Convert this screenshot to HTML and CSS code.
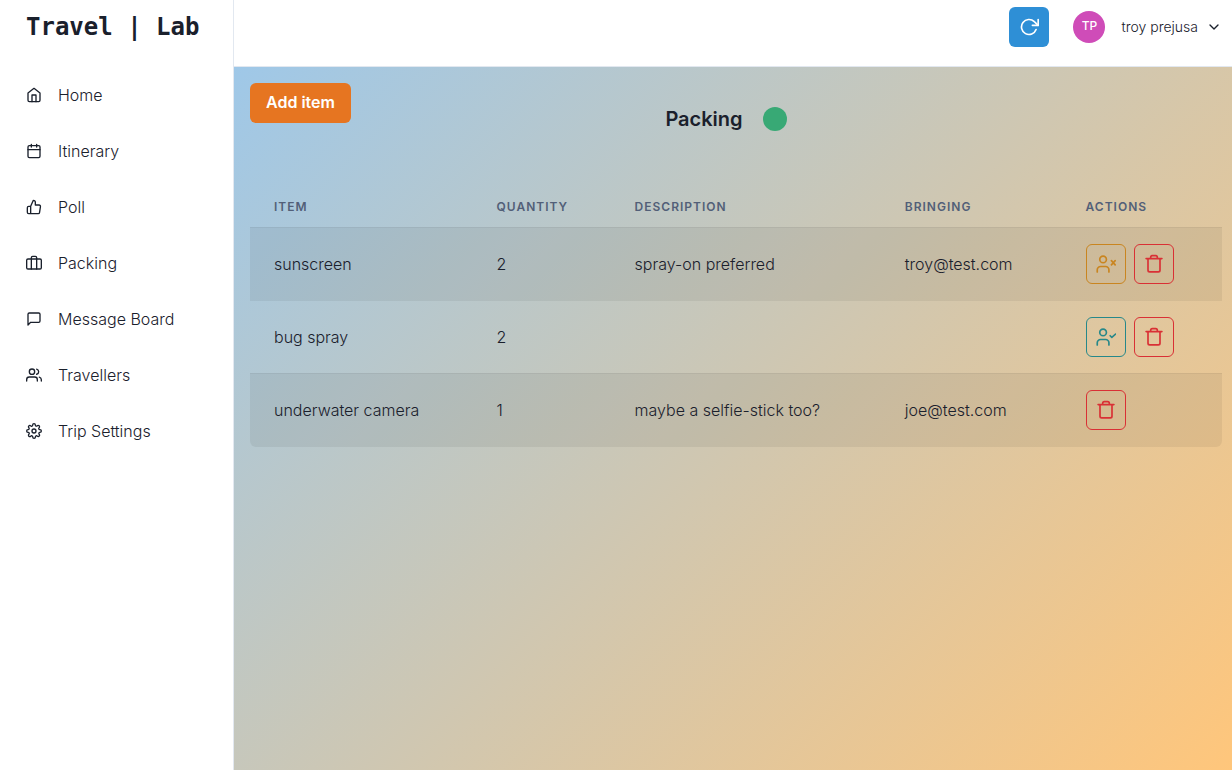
FILE: index.html
```html
<!DOCTYPE html>
<html lang="en">
<head>
<meta charset="utf-8">
<title>Travel | Lab</title>
<link rel="stylesheet" href="styles.css">
</head>
<body>
<svg class="sprite" aria-hidden="true">
  <symbol id="trash" viewBox="0 0 24 24"><path d="M4.800 5.500v14a2 2 0 0 0 2 2h10.400a2 2 0 0 0 2-2v-14M2.500 5.500h19M8 5.500V4a2 2 0 0 1 2-2h4a2 2 0 0 1 2 2v1.500"/></symbol>
</svg>
<div class="app">
  <aside class="sidebar">
    <h1 class="brand">Travel | Lab</h1>
    <nav class="nav">
      <a class="nav-link" href="#home"><svg class="nav-icon" viewBox="0 0 24 24"><path d="M3 9l9-7 9 7v11a2 2 0 0 1-2 2H5a2 2 0 0 1-2-2z"/><path d="M9 22V12h6v10"/></svg>Home</a>
      <a class="nav-link" href="#itinerary"><svg class="nav-icon" viewBox="0 0 24 24"><rect x="3" y="4" width="18" height="18" rx="2"/><path d="M16 2v4M8 2v4M3 10h18"/></svg>Itinerary</a>
      <a class="nav-link" href="#poll"><svg class="nav-icon" viewBox="0 0 24 24"><path d="M14 9V5a3 3 0 0 0-3-3l-4 9v11h11.280a2 2 0 0 0 2-1.700l1.380-9a2 2 0 0 0-2-2.300zM7 22H4a2 2 0 0 1-2-2v-7a2 2 0 0 1 2-2h3"/></svg>Poll</a>
      <a class="nav-link" href="#packing"><svg class="nav-icon" viewBox="0 0 24 24"><rect x="1" y="6" width="22" height="15" rx="2"/><path d="M16 21V4a2 2 0 0 0-2-2h-4a2 2 0 0 0-2 2v17"/></svg>Packing</a>
      <a class="nav-link" href="#messages"><svg class="nav-icon" viewBox="0 0 24 24"><path d="M21 15a2 2 0 0 1-2 2H7l-4 4V5a2 2 0 0 1 2-2h14a2 2 0 0 1 2 2z"/></svg>Message Board</a>
      <a class="nav-link" href="#travellers"><svg class="nav-icon" viewBox="0 0 24 24"><path d="M17 21v-2a4 4 0 0 0-4-4H5a4 4 0 0 0-4 4v2"/><circle cx="9" cy="7" r="4"/><path d="M23 21v-2a4 4 0 0 0-3-3.870M16 3.130a4 4 0 0 1 0 7.750"/></svg>Travellers</a>
      <a class="nav-link" href="#settings"><svg class="nav-icon" viewBox="0 0 24 24"><circle cx="12" cy="12" r="3"/><path d="M19.400 15a1.650 1.650 0 0 0 .33 1.820l.06.06a2 2 0 1 1-2.830 2.830l-.06-.06a1.650 1.650 0 0 0-2.800 1.170V21a2 2 0 0 1-4 0v-.09A1.650 1.650 0 0 0 7.200 19.700l-.06.06a2 2 0 1 1-2.830-2.830l.06-.06A1.650 1.650 0 0 0 3.090 14H3a2 2 0 0 1 0-4h.09A1.650 1.650 0 0 0 4.300 7.200l-.06-.06a2 2 0 1 1 2.830-2.830l.06.06A1.650 1.650 0 0 0 10 3.090V3a2 2 0 0 1 4 0v.09a1.650 1.650 0 0 0 2.800 1.210l.06-.06a2 2 0 1 1 2.830 2.830l-.06.06A1.650 1.650 0 0 0 20.910 10H21a2 2 0 0 1 0 4h-.09a1.650 1.650 0 0 0-1.510 1z"/></svg>Trip Settings</a>
    </nav>
  </aside>
  <div class="page">
    <header class="topbar">
      <button class="refresh" type="button" aria-label="Refresh"><svg class="icon" viewBox="0 0 24 24"><path d="M23 3v7h-7"/><path d="M20.490 15a9 9 0 1 1-2.120-9.360L23 10"/></svg></button>
      <button class="profile" type="button"><span class="avatar">TP</span>troy prejusa<svg class="chevron" viewBox="0 0 24 24"><path d="M6 9l6 6 6-6"/></svg></button>
    </header>
    <main class="content">
      <button class="add" type="button">Add item</button>
      <div class="heading"><h2 class="title">Packing</h2><span class="status"></span></div>
      <table class="items">
        <colgroup><col class="col-item"><col class="col-quantity"><col class="col-description"><col class="col-bringing"><col class="col-actions"></colgroup>
        <thead><tr><th>Item</th><th>Quantity</th><th>Description</th><th>Bringing</th><th>Actions</th></tr></thead>
        <tbody>
          <tr><td>sunscreen</td><td>2</td><td>spray-on preferred</td><td>troy@test.com</td><td><div class="actions">
            <button class="action leave" type="button" aria-label="Stop bringing"><svg class="icon" viewBox="0 0 24 24"><circle cx="8.500" cy="6.500" r="4"/><path d="M1.500 21.500v-2.500a4 4 0 0 1 4-4h6a4 4 0 0 1 4 4v2.500M18.500 8l4.500 5M23 8l-4.500 5"/></svg></button>
            <button class="action remove" type="button" aria-label="Delete"><svg class="icon"><use href="#trash"/></svg></button></div></td></tr>
          <tr><td>bug spray</td><td>2</td><td></td><td></td><td><div class="actions">
            <button class="action bring" type="button" aria-label="Bring item"><svg class="icon" viewBox="0 0 24 24"><circle cx="8.500" cy="6.500" r="4"/><path d="M1.500 21.500v-2.500a4 4 0 0 1 4-4h6a4 4 0 0 1 4 4v2.500M17 10.500l2 2 4.500-4"/></svg></button>
            <button class="action remove" type="button" aria-label="Delete"><svg class="icon"><use href="#trash"/></svg></button></div></td></tr>
          <tr><td>underwater camera</td><td>1</td><td>maybe a selfie-stick too?</td><td>joe@test.com</td><td><div class="actions">
            <button class="action remove" type="button" aria-label="Delete"><svg class="icon"><use href="#trash"/></svg></button></div></td></tr>
        </tbody>
      </table>
    </main>
  </div>
</div>
</body>
</html>
```
FILE: styles.css
```css
* { box-sizing: border-box; }
body { margin: 0; font: 300 16px/24px Inter, "Liberation Sans", sans-serif; color: #1a202c; background: #fff; }
button { font: inherit; color: inherit; border: 0; padding: 0; background: none; cursor: pointer; }
svg { flex: none; fill: none; stroke: currentColor; stroke-width: 2; stroke-linecap: round; stroke-linejoin: round; }
.sprite { display: none; }
.app { display: flex; min-height: 100vh; }
.sidebar { flex: 0 0 234px; border-right: 1px solid #e2e8f0; }
.brand { margin: 0; padding: 9px 26px 0; font: bold 24px/36px "DejaVu Sans Mono", monospace; }
.nav { display: flex; flex-direction: column; padding-top: 22px; }
.nav-link { display: flex; align-items: center; gap: 16px; height: 56px; padding-left: 26px; color: inherit; text-decoration: none; }
.nav-icon { width: 16px; height: 16px; }
.page { flex: 1; min-width: 0; display: flex; flex-direction: column; }
.topbar { display: flex; justify-content: flex-end; align-items: flex-start; gap: 24px; height: 67px; padding: 7px 10px 0 16px; border-bottom: 1px solid #e2e8f0; }
.refresh { display: flex; align-items: center; justify-content: center; width: 40px; height: 40px; border-radius: 6px; background: #2e8fd6; color: #fff; }
.icon { width: 20px; height: 20px; }
.profile { display: flex; align-items: center; height: 40px; font-size: 14px; gap: 8px; }
.avatar { width: 32px; height: 32px; margin-right: 8px; border-radius: 50%; background: #cf4cb8; color: #fff; font-size: 12px; font-weight: 500; line-height: 30px; text-align: center; }
.chevron { width: 16px; height: 16px; }
.content { flex: 1; padding: 16px 10px 16px 16px; background: linear-gradient(135deg, #9fc8e8, #ffc67b); }
.add { display: block; height: 40px; padding: 0 16px 2px; border-radius: 6px; background: #e67521; color: #fff; font-weight: 600; }
.heading { display: flex; justify-content: center; align-items: center; gap: 20px; margin: -16px 0 56px; padding-right: 20px; }
.title { margin: 0; font-size: 20px; line-height: 24px; font-weight: 600; }
.status { width: 24px; height: 24px; border-radius: 50%; background: #38a975; }
.items { width: 100%; table-layout: fixed; border-collapse: separate; border-spacing: 0; }
.col-item { width: 22.900%; }
.col-quantity { width: 14.200%; }
.col-description { width: 27.800%; }
.col-bringing { width: 18.600%; }
th, td { padding: 16px 24px; text-align: left; border-bottom: 1px solid transparent; }
th { padding: 12px 24px; font-size: 12px; line-height: 16px; font-weight: 600; letter-spacing: 1px; text-transform: uppercase; color: #525f78; border-color: rgba(0, 0, 0, .1); }
tbody tr:nth-child(odd) td { background: rgba(0, 0, 0, .06); }
tbody tr:nth-child(even) td { border-color: rgba(0, 0, 0, .1); }
tbody tr:last-child td:first-child { border-bottom-left-radius: 6px; }
tbody tr:last-child td:last-child { border-bottom-right-radius: 6px; }
.actions { display: flex; gap: 8px; }
.action { display: flex; align-items: center; justify-content: center; width: 40px; height: 40px; border: 1px solid currentColor; border-radius: 6px; }
.leave { color: #c98520; }
.bring { color: #26888a; }
.remove { color: #d93035; }
```
